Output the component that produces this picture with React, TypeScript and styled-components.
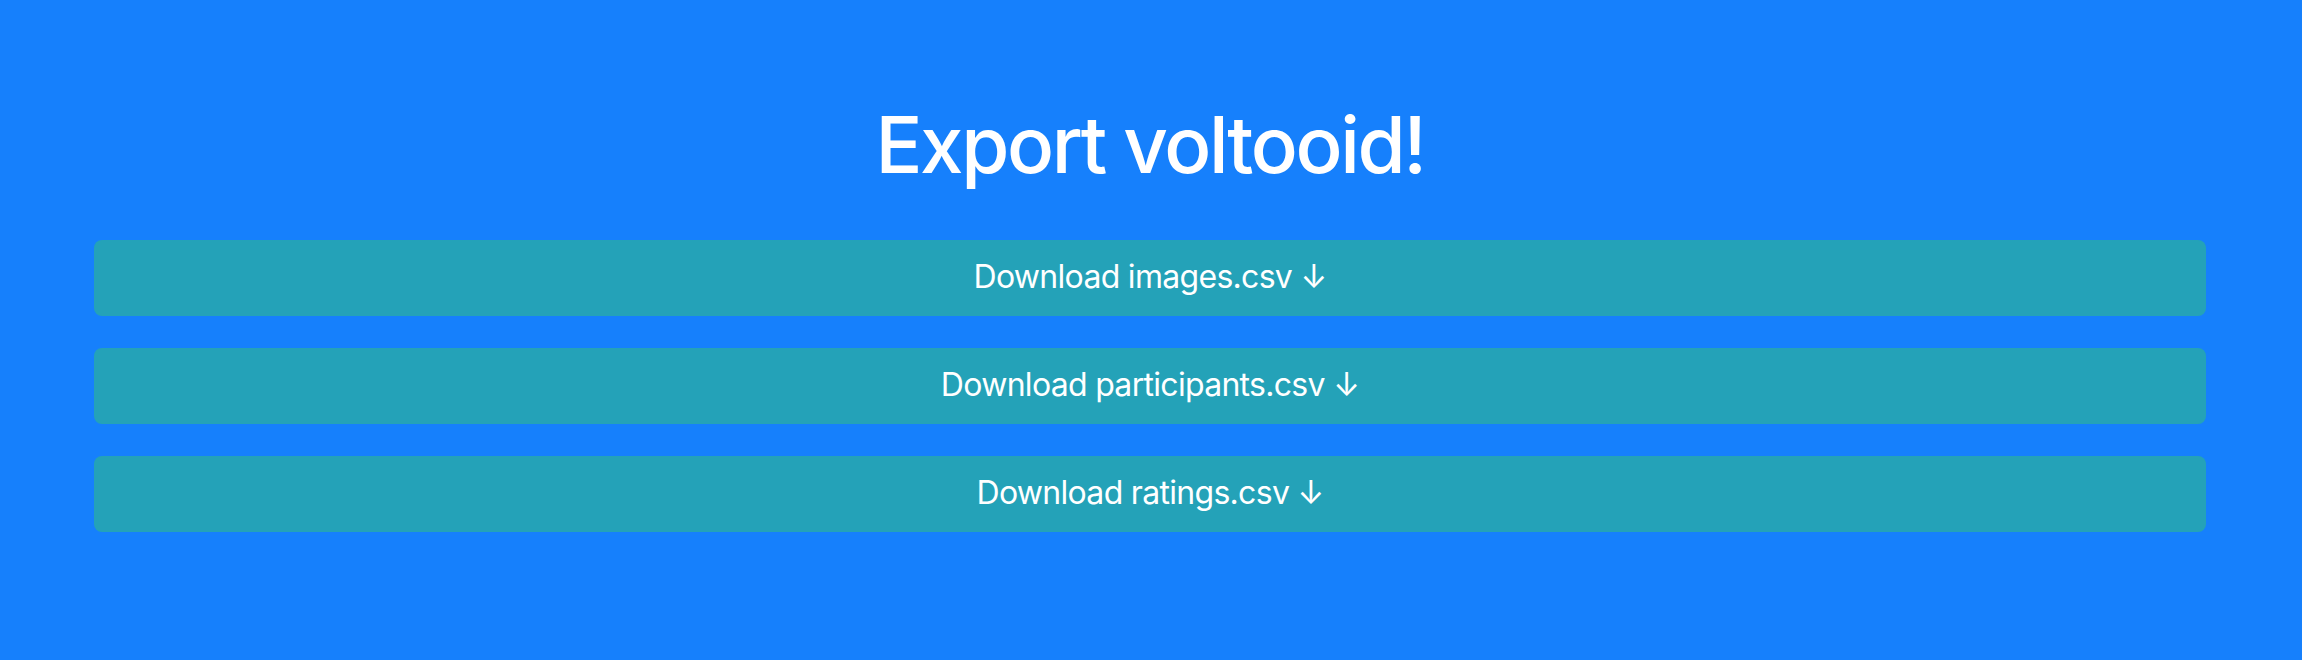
import React from "react";
import styled, { createGlobalStyle } from "styled-components";

const GlobalStyle = createGlobalStyle`
  html, body {
    margin: 0;
    padding: 0;
    background: #1680fc;
  }
  body {
    font-family: Inter, "Noto Sans", "Liberation Sans", sans-serif;
    -webkit-font-smoothing: antialiased;
  }
`;

const Page = styled.main`
  min-height: 660px;
  background: #1680fc;
  padding: 98px 96px 0 94px;
  box-sizing: border-box;
  display: flex;
  flex-direction: column;
  align-items: stretch;
`;

const Title = styled.h1`
  margin: 0 0 48px;
  color: #ffffff;
  font-size: 78px;
  font-weight: 500;
  line-height: 1.2;
  text-align: center;
  letter-spacing: -2.4px;
`;

const ButtonList = styled.div`
  display: flex;
  flex-direction: column;
  gap: 32px;
`;

const DownloadButton = styled.a`
  display: block;
  height: 76px;
  box-sizing: border-box;
  padding: 13px 26px;
  border-radius: 8px;
  background: #24a2b8;
  color: #ffffff;
  font-size: 32px;
  font-weight: 400;
  line-height: 48px;
  text-align: center;
  text-decoration: none;
  letter-spacing: -0.7px;
  cursor: pointer;
`;

const files = ["images.csv", "participants.csv", "ratings.csv"];

export default function App() {
  return (
    <>
      <GlobalStyle />
      <Page>
        <Title>Export voltooid!</Title>
        <ButtonList>
          {files.map((f) => (
            <DownloadButton key={f} href="#">
              Download {f} ↓
            </DownloadButton>
          ))}
        </ButtonList>
      </Page>
    </>
  );
}
